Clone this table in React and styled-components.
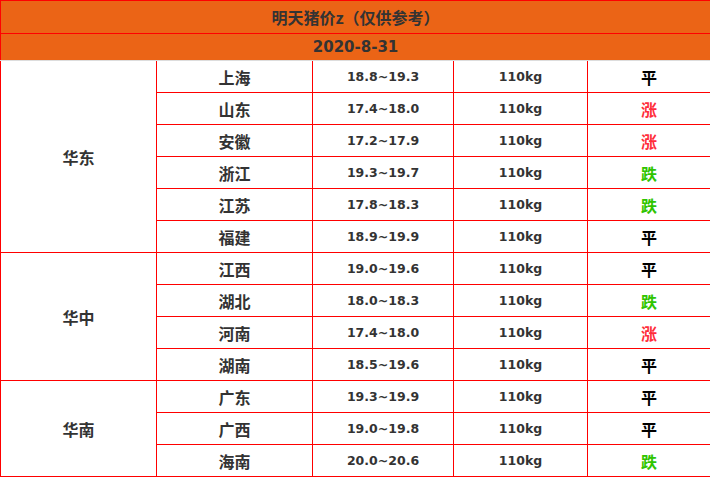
import React from 'react'
import styled, { createGlobalStyle } from 'styled-components'

const Global = createGlobalStyle`
  html, body {
    margin: 0;
    padding: 0;
    background: #fff;
  }
`

const Table = styled.table`
  width: 710px;
  border-collapse: collapse;
  table-layout: fixed;
  font-family: "DejaVu Sans", "Noto Sans CJK SC", sans-serif;
  color: #333;
  font-weight: bold;
`

const Col = styled.col`
  width: ${p => p.$w}px;
`

const HeadCell = styled.td`
  background: #eb6416;
  border: 1px solid #f00;
  border-bottom-color: ${p => (p.$last ? '#ddd' : '#f00')};
  height: ${p => p.$h}px;
  padding: 0;
  text-align: center;
  font-family: ${p => (p.$cjk ? '"Noto Sans CJK SC", sans-serif' : '"DejaVu Sans", sans-serif')};
  font-size: ${p => (p.$cjk ? '16px' : '15px')};
  color: #333;
`

const Cell = styled.td`
  border: 1px solid #f00;
  height: 31px;
  padding: 0;
  text-align: center;
  font-family: "Noto Sans CJK SC", sans-serif;
  font-size: 16px;
  color: #333;
`

const Num = styled(Cell)`
  font-family: "DejaVu Sans", sans-serif;
  font-size: 12.5px;
`

const trendColor = {
  平: '#000',
  涨: '#ff2d3a',
  跌: '#2fc400',
}

const Trend = styled(Cell)`
  color: ${p => trendColor[p.$t]};
  font-weight: bold;
  font-size: 16px;
`

const regions = [
  {
    name: '华东',
    rows: [
      ['上海', '18.8~19.3', '平'],
      ['山东', '17.4~18.0', '涨'],
      ['安徽', '17.2~17.9', '涨'],
      ['浙江', '19.3~19.7', '跌'],
      ['江苏', '17.8~18.3', '跌'],
      ['福建', '18.9~19.9', '平'],
    ],
  },
  {
    name: '华中',
    rows: [
      ['江西', '19.0~19.6', '平'],
      ['湖北', '18.0~18.3', '跌'],
      ['河南', '17.4~18.0', '涨'],
      ['湖南', '18.5~19.6', '平'],
    ],
  },
  {
    name: '华南',
    rows: [
      ['广东', '19.3~19.9', '平'],
      ['广西', '19.0~19.8', '平'],
      ['海南', '20.0~20.6', '跌'],
    ],
  },
]

export default function App() {
  return (
    <>
      <Global />
      <Table>
        <colgroup>
          <Col $w={156} />
          <Col $w={156} />
          <Col $w={141} />
          <Col $w={134} />
          <Col $w={123} />
        </colgroup>
        <tbody>
          <tr>
            <HeadCell colSpan={5} $h={32} $cjk>明天猪价z（仅供参考）</HeadCell>
          </tr>
          <tr>
            <HeadCell colSpan={5} $h={26} $last>2020-8-31</HeadCell>
          </tr>
          {regions.map(r =>
            r.rows.map((row, i) => (
              <tr key={r.name + row[0]}>
                {i === 0 && <Cell rowSpan={r.rows.length}>{r.name}</Cell>}
                <Cell>{row[0]}</Cell>
                <Num>{row[1]}</Num>
                <Num>110kg</Num>
                <Trend $t={row[2]}>{row[2]}</Trend>
              </tr>
            ))
          )}
        </tbody>
      </Table>
    </>
  )
}
